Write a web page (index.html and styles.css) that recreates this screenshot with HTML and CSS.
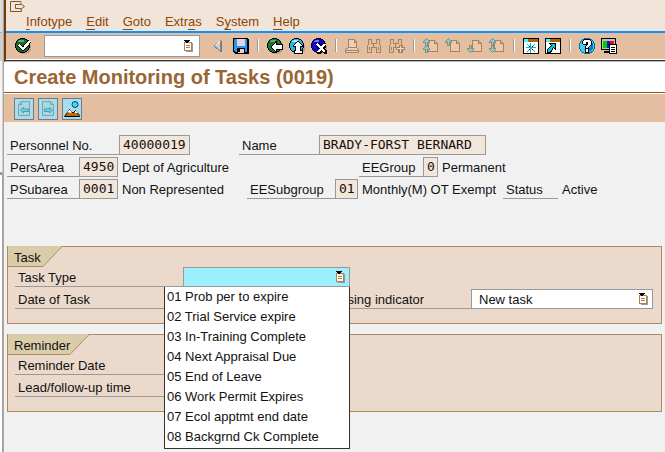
FILE: index.html
```html
<!DOCTYPE html>
<html lang="en">
<head>
<meta charset="utf-8">
<title>Create Monitoring of Tasks (0019)</title>
<link rel="stylesheet" href="styles.css">
</head>
<body>
<svg class="defs" aria-hidden="true">
  <defs>
    <symbol id="list" viewBox="0 0 10 12">
      <path fill="#999" d="M3 3h7v9H3z"/><path fill="#b08050" d="M1 2h8v9H1z"/><path fill="#fff" d="M2 3h6v7H2z"/>
      <path fill="#b08050" d="M3 5h4v1H3zM3 7h4v1H3z"/><path fill="#000" d="M1 0h6v1H1zM2 1h4v1H2zM3 2h2v1H3z"/>
    </symbol>
    <symbol id="ball" viewBox="0 0 16 16">
      <path fill="#c99a8c" d="M12 4h2v1h1v2h1v6h-1v1h-1v1h-2v1H6v-1H4v-2h8z"/>
      <path fill="#000" d="M5 0h5v1h2v1h1v1h1v2h1v5h-1v2h-1v1h-1v1h-2v1H5v-1H3v-1H2v-1H1v-2H0V5h1V3h1V2h1V1h2z"/>
      <path fill="currentColor" d="M5 1h5v1h2v1h1v2h1v5h-1v2h-1v1h-2v1H5v-1H3v-1H2v-2H1V5h1V3h1V2h2z"/>
    </symbol>
    <symbol id="page" viewBox="0 0 16 16">
      <path fill="#edc7a9" stroke="#a18462" d="M5.500 13.500V2.500H11.500L14.500 5.500V13.500zM11.500 2.500V5.500H14.500"/>
    </symbol>
    <symbol id="glasses" viewBox="0 0 16 16">
      <path fill="#e8bd9c" stroke="#a18462" d="M.5 14.500V8.500L1.500 5.500V1.500H4.500V5.500H9.500V1.500H12.500V5.500L13.500 8.500V14.500H9.500V9.500H4.500V14.500zM2.500 9v3M11.500 9v3M6.500 5v4"/>
    </symbol>
    <symbol id="up" viewBox="0 0 7 8"><path fill="#87907a" d="M3 0h1v1h1v1h1v1h1v2H5v3H2V5H0V3h1V2h1V1h1z"/><path fill="#8fc9cc" d="M3 1h1v1h1v1h1v1H4v3H3V4H1V3h1V2h1z"/></symbol>
    <symbol id="down" viewBox="0 0 7 8"><path fill="#87907a" d="M2 0h3v3h2v2H6v1H5v1H4v1H3V7H2V6H1V5H0V3h2z"/><path fill="#8fc9cc" d="M3 1h1v3h2v1H5v1H4v1H3V6H2V5H1V4h2z"/></symbol>
  </defs>
</svg>
<div class="desktop">
  <div class="backdrop"><div class="backdrop-top"></div><div class="backdrop-bottom"></div></div>
  <div class="window">
    <header class="top">
      <div class="menu-area">
        <svg class="session" viewBox="0 0 16 12"><path fill="none" stroke="#8a5220" d="M11 1.500V.5H.5V10.500H11.500V8.500M5.500 3.500H10.500V2.500L14.500 5.500L10.500 8.500V7.500H5.500z"/></svg>
        <nav class="menu">
          <a href="#"><u>I</u>nfotype</a><a href="#"><u>E</u>dit</a><a href="#"><u>G</u>oto</a><a href="#">Extr<u>a</u>s</a><a href="#">S<u>y</u>stem</a><a href="#"><u>H</u>elp</a>
        </nav>
      </div>
      <div class="toolbar">
        <button aria-label="Enter"><svg viewBox="0 0 16 16"><use href="#ball" color="#176a2c"/><path fill="#62ad70" d="M4 2h5v2H3V3h1z"/><path fill="none" stroke="#000" stroke-width="4" d="M4 7l4 4 7-8"/><path fill="none" stroke="#fff" stroke-width="2.500" d="M4 7l4 4 7-8"/></svg></button>
        <span class="command"><input type="text" aria-label="Command"><svg class="list-icon"><use href="#list"/></svg></span>
        <button class="collapse" aria-label="Collapse"><svg viewBox="0 0 16 16"><path fill="#ccc" stroke="#888" d="M9.500 2.500v11L3.500 8z"/><path stroke="#fff" d="M4 8l5-5"/><path stroke="#777" d="M10.500 3v11"/></svg></button>
        <button aria-label="Save"><svg viewBox="0 0 16 16"><path d="M0 0h15v1h1v15H2l-2-2z"/><path fill="#2b96ee" d="M1 1h3v13H2l-1-1zM12 1h2v13h-2zM3 8h10v2H3z"/><path fill="#e8d3dc" d="M4 1h8v7H4zM5 11h6v4H5z"/><path fill="#000" d="M5 11h2v3H5z"/></svg></button>
        <i class="sep"></i>
        <button aria-label="Back"><svg viewBox="0 0 16 16"><use href="#ball" color="#187337"/><path fill="#62ad70" d="M4 2h5v2H3V3h1z"/><path d="M8 3h2v3h6v6h-6v2H8v-1H7v-1H6v-1H5v-1H4V8h1V7h1V6h1V5h1z"/><path fill="#fff" d="M8 5h1v2h6v4H9v2H8v-1H7v-1H6v-1H5V8h1V7h1V6h1z"/></svg></button>
        <button aria-label="Exit"><svg viewBox="0 0 16 16"><use href="#ball" color="#20b6e8"/><path fill="#9ef" d="M4 2h5v2H3V3h1z"/><path d="M8 3h2v1h1v1h1v1h1v1h1v2h-2v3h2v4H5v-4h1V9H4V7h1V6h1V5h1V4h1z"/><path fill="#fff" d="M8 4h2v1h1v1h1v1h1v1h-2v5h2v2H6v-2h1V8H5V7h1V6h1V5h1z"/></svg></button>
        <button aria-label="Cancel"><svg viewBox="0 0 16 16"><use href="#ball" color="#1100cc"/><path fill="#77f" d="M4 2h4v2H3V3h1z"/><path fill="#000" d="M5 5h3l2 2 2-2h3v3l-2 2 3 3v3h-3l-2-2-2 2H6v-3l2-2-3-3z"/><path fill="none" stroke="#fff" stroke-width="2" d="M6 6l8 8M14 6l-7 8"/></svg></button>
        <i class="sep"></i>
        <button disabled aria-label="Print"><svg viewBox="0 0 16 16"><path fill="#efcdbb" stroke="#a18462" d="M3.500 9.500V1.500H9.500L11.500 3.500V9.500M.5 14.500V11.500L3.500 9.500H11.500L13.500 11.500V14.500zM0 12.500H14M9.500 2V4H12"/></svg></button>
        <button disabled aria-label="Find"><svg viewBox="0 0 16 16"><use href="#glasses"/></svg></button>
        <button disabled aria-label="Find next"><svg viewBox="0 0 16 16"><use href="#glasses"/><path fill="#f3dcc8" stroke="#a18462" d="M10.500 7.500H12.500V9.500H15.500V11.500H12.500V14.500H10.500V11.500H7.500V9.500H10.500z"/></svg></button>
        <i class="sep"></i>
        <button disabled aria-label="First page"><svg viewBox="0 0 16 16"><use href="#page"/><use href="#up" width="7" height="8"/><use href="#up" y="7" width="7" height="8"/></svg></button>
        <button disabled aria-label="Previous page"><svg viewBox="0 0 16 16"><use href="#page"/><use href="#up" width="7" height="8"/></svg></button>
        <button disabled aria-label="Next page"><svg viewBox="0 0 16 16"><use href="#page"/><use href="#down" y="7" width="7" height="8"/></svg></button>
        <button disabled aria-label="Last page"><svg viewBox="0 0 16 16"><use href="#page"/><use href="#up" width="7" height="8"/><use href="#down" y="7" width="7" height="8"/></svg></button>
        <i class="sep"></i>
        <button aria-label="New session"><svg viewBox="0 0 16 16"><path d="M0 0h16v16H0z"/><path fill="#fff" d="M1 4h14v11H1z"/><path fill="#a66508" d="M5 1h10v3H5z"/><path fill="#5ef" d="M1 1h4v3H1z"/><path fill="none" stroke="#0bc" d="M7.500 5v10M3 9.500h10M4 6l8 8M12 6l-8 8"/><path d="M6 8h1v1H6zM9 8h1v1H9zM6 11h1v1H6zM9 11h1v1H9z"/></svg></button>
        <button aria-label="Create shortcut"><svg viewBox="0 0 16 16"><path d="M0 0h16v16H0z"/><path fill="#fff" d="M1 4h14v11H1z"/><path fill="#a66508" d="M5 1h10v3H5z"/><path fill="#5ef" d="M1 1h4v3H1z"/><path fill="#0cd" stroke="#000" d="M2.500 14.500V11.500L6.500 7.500L4.500 5.500H10.500V11.500L8.500 9.500L5.500 14.500z"/></svg></button>
        <i class="sep"></i>
        <button aria-label="Help"><svg viewBox="0 0 16 16"><path fill="#067090" d="M5 0h6v1h2v1h1v1h1v2h1v6h-1v2h-1v1h-1v1h-2v1H5v-1H3v-1H2v-1H1v-2H0V5h1V3h1V2h1V1h2z"/><path fill="#3bd0f5" d="M5 1h6v1h2v1h1v2h1v6h-1v2h-2v1h-2v1H5v-1H3v-1H2v-2H1V5h1V3h1V2h2z"/><path fill="#0870e0" d="M12 3h1v2h1v6h-1v1h-1v1h-2v-3l2-2z"/><path d="M5 1h6v1h1v1h1v4h-1v1h-1v1h-1v6H6V8h1V7H4V6H3V3h1V2h1z"/><path fill="#fff" d="M5 2h6v1h1v4h-1v1h-1v1H9v1H7V8h1V7h1V4H7v2H4V3h1zM7 11h2v3H7z"/></svg></button>
        <button aria-label="Customize layout"><svg viewBox="0 0 16 16"><path d="M0 0h15v12H0zM3 13h6v2H3z"/><path fill="#c8c0b0" d="M1 1h13v10H1z"/><path fill="#0c0" d="M2 3h4v7H2z"/><path fill="#11d" d="M6 3h3v7H6z"/><path fill="#e01010" d="M9 3h4v5H9z"/><path fill="#fff" stroke="#000" d="M8.500 6.500h7v9h-7z"/><path d="M10 9h4v1h-4zM10 11h4v1h-4zM10 13h4v1h-4z"/></svg></button>
      </div>
    </header>
    <h1>Create Monitoring of Tasks (0019)</h1>
    <div class="app-bar">
      <button disabled aria-label="Previous record"><svg viewBox="0 0 16 16"><path fill="#a6d8dd" stroke="#7ba4ae" d="M2.500 14.500V3.500L5.500.5H13.500V14.500zM5.500.5V3.500H2.500"/><path fill="#69d9ea" stroke="#4a9caa" d="M4.500 9L7.500 6.500V8H12.500V10.500H7.500V12z"/></svg></button>
      <button disabled aria-label="Next record"><svg viewBox="0 0 16 16"><path fill="#a6d8dd" stroke="#7ba4ae" d="M2.500 14.500V.5H10.500L13.500 3.500V14.500zM10.500.5V3.500H13.500"/><path fill="#69d9ea" stroke="#4a9caa" d="M12.500 9L9.500 6.500V8H4.500V10.500H9.500V12z"/></svg></button>
      <button aria-label="Overview"><svg viewBox="0 0 16 16"><circle cx="11" cy="3.500" r="3" fill="#3ddcf4" stroke="#146"/><path fill="#c06a10" stroke="#000" d="M.5 15.500L5.500 8.500L9 12L11.500 9.500L15.500 14.500V15.500z"/><path fill="#fff" d="M5 9h1l2 2-2 1-1-1-2 1zM11 10h1l2 2h-3z"/></svg></button>
    </div>
    <main>
      <section class="person">
        <div class="row">
          <label class="name wide" for="pernr">Personnel No.</label><input class="mono pernr" id="pernr" readonly value="40000019">
          <label class="name fullname" for="fullname">Name</label><input class="mono fullname-box" id="fullname" readonly value="BRADY-FORST BERNARD">
        </div>
        <div class="row">
          <label class="name" for="area">PersArea</label><input class="mono four" id="area" readonly value="4950">
          <span class="value area-value">Dept of Agriculture</span>
          <label class="name eegroup" for="eegroup">EEGroup</label><input class="mono one" id="eegroup" readonly value="0">
          <span class="value">Permanent</span>
        </div>
        <div class="row">
          <label class="name" for="subarea">PSubarea</label><input class="mono four" id="subarea" readonly value="0001">
          <span class="value subarea-value">Non Represented</span>
          <label class="name subgroup" for="subgroup">EESubgroup</label><input class="mono two" id="subgroup" readonly value="01">
          <span class="value subgroup-value">Monthly(M) OT Exempt</span>
          <span class="name status">Status</span><span class="value">Active</span>
        </div>
      </section>
      <section class="group">
        <h2><svg class="tab" viewBox="0 0 55 21"><path fill="#d9cca9" d="M0 0H54L35 20H0z"/><path fill="none" stroke="#b08a5c" d="M0 20.500H35L54.500 0"/></svg><span>Task</span></h2>
        <div class="row">
          <label class="name field" for="tasktype">Task Type</label>
          <div class="combo">
            <input id="tasktype" class="tasktype" role="combobox" aria-expanded="true" aria-controls="types"><svg class="list-icon"><use href="#list"/></svg>
            <ul id="types" class="options" role="listbox">
              <li role="option">01 Prob per to expire</li><li role="option">02 Trial Service expire</li><li role="option">03 In-Training Complete</li><li role="option">04 Next Appraisal Due</li><li role="option">05 End of Leave</li><li role="option">06 Work Permit Expires</li><li role="option">07 Ecol apptmt end date</li><li role="option">08 Backgrnd Ck Complete</li>
            </ul>
          </div>
        </div>
        <div class="row">
          <label class="name field" for="taskdate">Date of Task</label><input class="date" id="taskdate">
          <label class="name processing" for="processing">Processing indicator</label>
          <span class="select"><select id="processing"><option>New task</option></select><svg class="list-icon"><use href="#list"/></svg></span>
        </div>
      </section>
      <section class="group">
        <h2><svg class="tab long" viewBox="0 0 82 21"><path fill="#d9cca9" d="M0 0H81L62 20H0z"/><path fill="none" stroke="#b08a5c" d="M0 20.500H62L81.500 0"/></svg><span>Reminder</span></h2>
        <div class="row"><label class="name field" for="reminder">Reminder Date</label><input class="date" id="reminder"></div>
        <div class="row"><label class="name field" for="lead">Lead/follow-up time</label><input class="date" id="lead"></div>
      </section>
    </main>
  </div>
</div>
</body>
</html>
```
FILE: styles.css
```css
* { box-sizing: border-box; }
body { margin: 0; font: 13px/20px "Liberation Sans", Arial, sans-serif; color: #111; background: #f1f1f1; overflow: hidden; }
button, input, select { font: inherit; color: inherit; margin: 0; padding: 0; border: 0; border-radius: 0; outline: 0; }
.defs { position: absolute; width: 0; height: 0; }
.desktop { display: flex; min-height: 100vh; }
.backdrop { width: 4px; display: flex; flex-direction: column; border-right: 1px solid #aaa6a3; background: #e8e6e4; }
.backdrop-top { height: 175px; border-right: 1px solid #d4cfcc; border-bottom: 3px solid #9c9894; background: linear-gradient(#dedcda 0 32px, #aaa 32px 33px, #d0cdca 33px 61px, #f5f4f2 61px); }
.backdrop-bottom { flex: 1; background: #fff; border-right: 1px solid #a5a09c; }
.window { flex: 1; min-width: 0; }

.top { border-left: 2px solid #6b3f08; border-bottom: 1px solid #b5b5b5; background: #f1e5d9; }
.menu-area { display: flex; flex-direction: column; height: 31px; padding: 1px 4px 0; }
.session { width: 16px; height: 12px; }
.menu { display: flex; gap: 14px; padding-left: 16px; line-height: 18px; }
.menu a { color: #8a4508; text-decoration: none; }
.menu u { text-underline-offset: 3px; }
.toolbar { display: flex; align-items: center; gap: 6px; height: 30px; padding: 0 9px 2px; border-top: 2px solid #0a94ff; border-bottom: 1px solid #333; background: #e3bea0; box-shadow: inset 0 -1px #fff; }
.toolbar button { width: 16px; height: 16px; background: none; flex: none; }
.toolbar svg { display: block; width: 16px; height: 16px; shape-rendering: crispEdges; }
.toolbar .collapse { margin-left: 5px; }
.sep { width: 2px; height: 13px; margin: 0 2px; border-left: 1px solid #999; background: #fff; }
.command { position: relative; width: 156px; height: 22px; margin-left: 7px; }
.command input { width: 100%; height: 100%; border: 1px solid #999; background: #fff; display: block; padding: 0 20px 0 4px; }
.list-icon, .toolbar .list-icon { position: absolute; top: 4px; right: 5px; width: 10px; height: 12px; pointer-events: none; }
.toolbar .list-icon { top: 5px; right: 7px; }

h1 { margin: 0; height: 31px; padding-left: 10px; font-size: 20px; line-height: 31px; color: #996633; background: #fff; border-bottom: 1px solid #8a5220; }
.app-bar { display: flex; gap: 4px; padding: 4px 10px 2px; border-top: 1px solid #fff; border-bottom: 2px solid #faf0e6; background: #e3bea0; }
.app-bar button { width: 20px; height: 22px; padding: 2px 1px; border: 1px solid #6b7b88; background: #a8dcf0; }
.app-bar svg { display: block; width: 16px; height: 16px; }

main { padding: 11px 3px; }
.person { display: flex; flex-direction: column; gap: 2px; margin-bottom: 47px; }
.row { display: flex; height: 20px; white-space: nowrap; }
.name { width: 72px; padding: 1px 0 0 3px; border-bottom: 1px solid #999; flex: none; }
.wide { width: 112px; }
.value { padding: 1px 0 0 4px; }
.mono { font: 13px/18px "DejaVu Sans Mono", "Liberation Mono", monospace; border: 1px solid #999; background: #f2e5d9; padding: 0 0 1px 3px; }
.pernr { width: 71px; }
.fullname { width: 80px; margin-left: 49px; }
.fullname-box { width: 167px; }
.four { width: 39px; }
.two { width: 23px; }
.one { width: 15px; }
.area-value { width: 241px; }
.eegroup { width: 64px; }
.subarea-value { width: 129px; }
.subgroup { width: 88px; }
.subgroup-value { width: 145px; }
.status { width: 55px; }

.group { display: flex; flex-direction: column; min-height: 78px; margin-bottom: 10px; padding: 0 7px; border: 1px solid #b08a5c; background: #ebdacb; }
.group .row + .row { margin-top: 2px; }
.group h2 { position: relative; margin: 0 -7px; height: 20px; padding-left: 6px; font-size: 13px; font-weight: normal; line-height: 21px; }
.tab { position: absolute; left: 0; top: -1px; width: 55px; height: 21px; }
.tab.long { width: 82px; }
.group h2 span { position: relative; }
.field { width: 168px; }
.combo { position: relative; width: 167px; }
.tasktype { width: 100%; height: 20px; border: 1px solid #999; background: #9befff; display: block; }
.options { position: absolute; z-index: 2; top: 20px; right: 0; width: 186px; margin: 0; padding: 0 0 1px 2px; list-style: none; border: 1px solid #333; border-top: 0; background: #fff; }
.date { width: 84px; border: 1px solid #999; background: #fff; }
.processing { flex: 1; margin-left: 37px; }
.select { position: relative; width: 182px; margin-right: 1px; }
.select select { appearance: none; width: 100%; height: 20px; padding: 0 20px 1px 7px; border: 1px solid #999; background: #fff; }
```
